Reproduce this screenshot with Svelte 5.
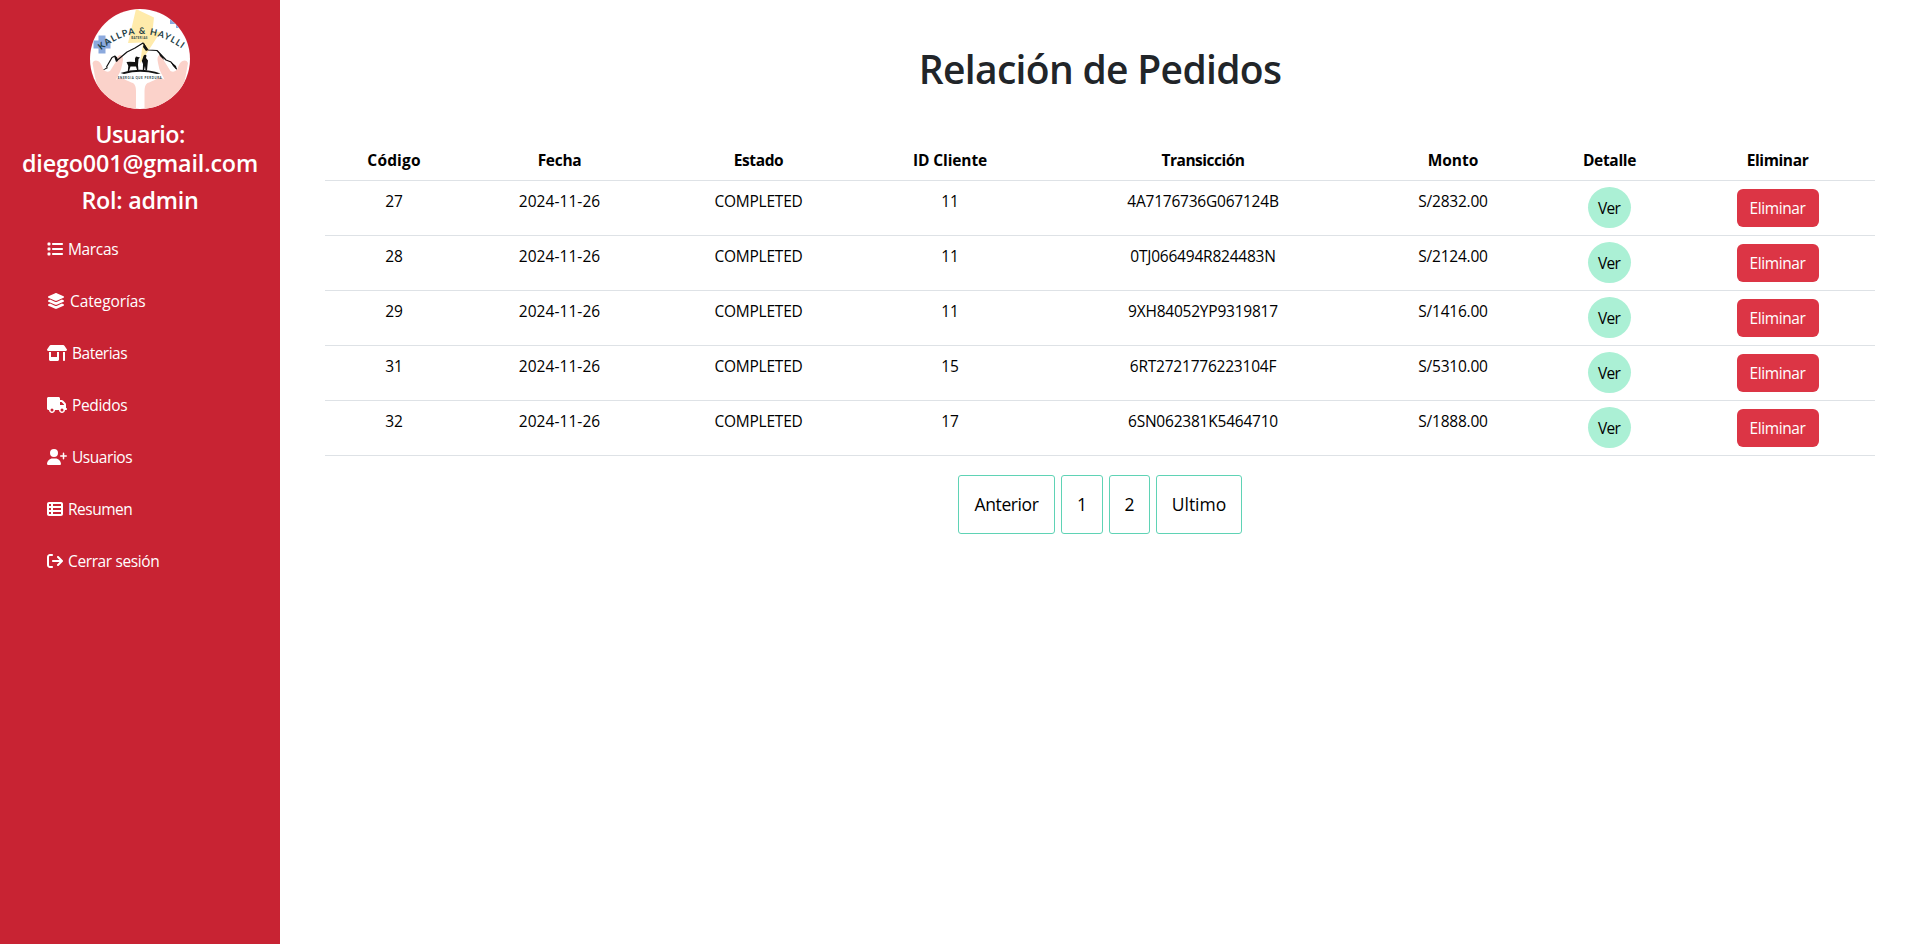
<script>
  const menu = [
    { label: 'Marcas', ls: -0.35, vw: 512, d: 'M40 48C26.7 48 16 58.7 16 72v48c0 13.3 10.7 24 24 24H88c13.3 0 24-10.7 24-24V72c0-13.3-10.7-24-24-24H40zM192 64c-17.7 0-32 14.3-32 32s14.3 32 32 32H480c17.7 0 32-14.3 32-32s-14.3-32-32-32H192zm0 160c-17.7 0-32 14.3-32 32s14.3 32 32 32H480c17.7 0 32-14.3 32-32s-14.3-32-32-32H192zm0 160c-17.7 0-32 14.3-32 32s14.3 32 32 32H480c17.7 0 32-14.3 32-32s-14.3-32-32-32H192zM16 232v48c0 13.3 10.7 24 24 24H88c13.3 0 24-10.7 24-24V232c0-13.3-10.7-24-24-24H40c-13.3 0-24 10.7-24 24zM40 368c-13.3 0-24 10.7-24 24v48c0 13.3 10.7 24 24 24H88c13.3 0 24-10.7 24-24V392c0-13.3-10.7-24-24-24H40z' },
    { label: 'Categorías', ls: -0.1, vw: 576, d: 'M264.5 5.2c14.9-6.9 32.1-6.9 47 0l218.6 101c8.5 3.9 13.9 12.4 13.9 21.8s-5.4 17.9-13.9 21.8l-218.6 101c-14.9 6.9-32.1 6.9-47 0L45.9 149.8C37.4 145.8 32 137.3 32 128s5.4-17.9 13.9-21.8L264.5 5.2zM476.9 209.6l53.2 24.6c8.5 3.9 13.9 12.4 13.9 21.8s-5.4 17.9-13.9 21.8l-218.6 101c-14.9 6.9-32.1 6.9-47 0L45.9 277.8C37.4 273.8 32 265.3 32 256s5.4-17.9 13.9-21.8l53.2-24.6 152 70.2c23.4 10.8 50.4 10.8 73.8 0l152-70.2zm-152 198.2l152-70.2 53.2 24.6c8.5 3.9 13.9 12.4 13.9 21.8s-5.4 17.9-13.9 21.8l-218.6 101c-14.9 6.9-32.1 6.9-47 0L45.9 405.8C37.4 401.8 32 393.3 32 384s5.4-17.9 13.9-21.8l53.2-24.6 152 70.2c23.4 10.8 50.4 10.8 73.8 0z' },
    { label: 'Baterias', ls: -0.5, vw: 640, d: 'M36.8 192H603.2c20.3 0 36.8-16.5 36.8-36.8c0-7.3-2.2-14.4-6.2-20.4L558.2 21.4C549.3 8 534.4 0 518.3 0H121.7c-16 0-31 8-39.9 21.4L6.2 134.7c-4 6.1-6.2 13.2-6.2 20.4C0 175.5 16.5 192 36.8 192zM64 224V384v80c0 26.5 21.5 48 48 48H336c26.5 0 48-21.5 48-48V384 224H320V384H128V224H64zm448 0V480c0 17.7 14.3 32 32 32s32-14.3 32-32V224H512z' },
    { label: 'Pedidos', ls: -0.35, vw: 640, d: 'M48 0C21.5 0 0 21.5 0 48V368c0 26.5 21.5 48 48 48H64c0 53 43 96 96 96s96-43 96-96H384c0 53 43 96 96 96s96-43 96-96h32c17.7 0 32-14.3 32-32s-14.3-32-32-32V288 256 237.3c0-17-6.7-33.3-18.7-45.3L512 114.7c-12-12-28.3-18.7-45.3-18.7H416V48c0-26.5-21.5-48-48-48H48zM416 160h50.7L544 237.3V256H416V160zM112 416a48 48 0 1 1 96 0 48 48 0 1 1 -96 0zm368-48a48 48 0 1 1 0 96 48 48 0 1 1 0-96z' },
    { label: 'Usuarios', ls: -0.45, vw: 640, d: 'M96 128a128 128 0 1 1 256 0A128 128 0 1 1 96 128zM0 482.3C0 383.8 79.8 304 178.3 304h91.4C368.2 304 448 383.8 448 482.3c0 16.4-13.3 29.7-29.7 29.7H29.7C13.3 512 0 498.7 0 482.3zM504 312V248H440c-13.3 0-24-10.7-24-24s10.7-24 24-24h64V136c0-13.3 10.7-24 24-24s24 10.7 24 24v64h64c13.3 0 24 10.7 24 24s-10.7 24-24 24H552v64c0 13.3-10.7 24-24 24s-24-10.7-24-24z' },
    { label: 'Resumen', ls: -0.5, vw: 512, d: 'M0 96C0 60.7 28.7 32 64 32H448c35.3 0 64 28.7 64 64V416c0 35.3-28.7 64-64 64H64c-35.3 0-64-28.7-64-64V96zm64 0v64h64V96H64zm384 0H192v64H448V96zM64 224v64h64V224H64zm384 0H192v64H448V224zM64 352v64h64V352H64zm384 0H192v64H448V352z' },
    { label: 'Cerrar sesión', ls: -0.38, vw: 512, d: 'M502.6 278.6c12.5-12.5 12.5-32.8 0-45.3l-128-128c-12.5-12.5-32.8-12.5-45.3 0s-12.5 32.8 0 45.3L402.7 224 192 224c-17.7 0-32 14.3-32 32s14.3 32 32 32l210.7 0-73.4 73.4c-12.5 12.5-12.5 32.8 0 45.3s32.8 12.5 45.3 0l128-128zM160 96c17.7 0 32-14.3 32-32s-14.3-32-32-32L96 32C43 32 0 75 0 128L0 384c0 53 43 96 96 96l64 0c17.7 0 32-14.3 32-32s-14.3-32-32-32l-64 0c-17.7 0-32-14.3-32-32l0-256c0-17.7 14.3-32 32-32l64 0z' }
  ];

  const columns = [
    { label: 'Código', width: 138, ls: 0.15 },
    { label: 'Fecha', width: 193, ls: -0.3 },
    { label: 'Estado', width: 205, ls: -0.4 },
    { label: 'ID Cliente', width: 178, ls: -0.1 },
    { label: 'Transicción', width: 328, ls: -0.5 },
    { label: 'Monto', width: 172, ls: 0 },
    { label: 'Detalle', width: 141, ls: -0.3 },
    { label: 'Eliminar', width: 195, ls: -0.38 }
  ];

  const orders = [
    { id: 27, date: '2024-11-26', status: 'COMPLETED', client: 11, tx: '4A7176736G067124B', amount: '2832.00' },
    { id: 28, date: '2024-11-26', status: 'COMPLETED', client: 11, tx: '0TJ066494R824483N', amount: '2124.00' },
    { id: 29, date: '2024-11-26', status: 'COMPLETED', client: 11, tx: '9XH84052YP9319817', amount: '1416.00' },
    { id: 31, date: '2024-11-26', status: 'COMPLETED', client: 15, tx: '6RT2721776223104F', amount: '5310.00' },
    { id: 32, date: '2024-11-26', status: 'COMPLETED', client: 17, tx: '6SN062381K5464710', amount: '1888.00' }
  ];

  const pages = [
    { label: 'Anterior', width: 97, ls: -0.42 },
    { label: '1', width: 42, ls: 0 },
    { label: '2', width: 41, ls: 0 },
    { label: 'Ultimo', width: 86, ls: -0.05 }
  ];
</script>

<div class="layout">
  <aside class="sidebar">
    <svg class="logo" viewBox="0 0 100 100" aria-label="Kallpa &amp; Haylli">
      <defs>
        <clipPath id="round"><circle cx="50" cy="50" r="50" /></clipPath>
        <path id="arc" d="M11 41.500Q50 8 95 42" />
        <path id="hand" d="M2.5 54Q4 50.5 8 52Q11 53 13 60Q16 64 20 62L27 51Q27 46 31 46Q34 47 32.500 54Q31.500 60 29.500 64Q27 68 26 71Q29 67 34 70Q40 73 43 74Q46 76 46 82V100H20V90Q7 82 5 68Z" />
      </defs>
      <g clip-path="url(#round)">
        <rect width="100" height="100" fill="#fff" />
        <path d="M46 0L64 8.500L62.500 22L70.500 23L50 54.500L53 33.500L38 34Z" fill="#ffebab" />
        <path d="M8.500 26.500h7v5h5v8h-5v5h-7v-5h-5v-8h5z" fill="#8ba9dd" />
        <path d="M84 3h10v16h-8v-4h-6v-7h4z" fill="#8ba9dd" />
        <use href="#hand" fill="#fbd2ca" />
        <use href="#hand" fill="#fbd2ca" transform="matrix(-1 0 0 1 100.500 0)" />
        <path d="M16.500 58L22 48.500L25 47L27.500 51L37 43L45 39L53 34L58 41L67 41.500L76 51L81 53L86.500 60" fill="none" stroke="#111" stroke-width="1.200" stroke-linejoin="round" />
        <path d="M13 61l4-3 1 1-4 2zM24 47l3 1 1 4-2 1zM54 34l4 7-2 1-3-4zM68 42l5 6 1 3-4-4zM80 52l6 5 1 4-4-4z" fill="#111" />
        <path d="M30.500 64Q50 57.500 70.500 64.500L67 65Q50 60.500 34 65Z" fill="#111" />
        <path d="M36.500 53Q39 52.500 45 53V49.500L46 47.500L50 48.500L48.500 50L48 56L48.500 62H47.300L46 57.500H40.500L39 62H37.800L38.300 57Z" fill="#111" />
        <path d="M53.500 47Q55 45 56.500 46.500L56 49L58 51.500L57.500 56L57 61.500H55.500L55 57L54 61.500H52.800L53 55L51.800 52Z" fill="#111" />
        <text class="name"><textPath href="#arc">KALLPA &amp; HAYLLI</textPath></text>
        <text class="tag" x="49.500" y="30">BATERIAS</text>
        <text class="tag slogan" x="50" y="69.700">ENERGIA QUE PERDURA</text>
      </g>
    </svg>
    <h4 class="user"><span class="user-label">Usuario:</span><span>diego001@gmail.com</span></h4>
    <h4 class="role">Rol: admin</h4>
    <nav class="menu">
      {#each menu as item}
        <a href="#top" class="menu-item">
          <svg class="icon" viewBox="0 0 {item.vw} 512" style="width: {item.vw / 32}px"><path d={item.d} /></svg>
          <span style="letter-spacing: {item.ls}px">{item.label}</span>
        </a>
      {/each}
    </nav>
  </aside>

  <main class="content">
    <h1>Relación de Pedidos</h1>
    <table>
      <colgroup>
        {#each columns as col}<col style="width: {col.width}px" />{/each}
      </colgroup>
      <thead>
        <tr>
          {#each columns as col}<th style="letter-spacing: {col.ls}px">{col.label}</th>{/each}
        </tr>
      </thead>
      <tbody>
        {#each orders as o}
          <tr>
            <td>{o.id}</td>
            <td class="date">{o.date}</td>
            <td>{o.status}</td>
            <td>{o.client}</td>
            <td>{o.tx}</td>
            <td>S/{o.amount}</td>
            <td><a href="#top" class="view">Ver</a></td>
            <td><button class="delete">Eliminar</button></td>
          </tr>
        {/each}
      </tbody>
    </table>
    <div class="pagination">
      {#each pages as p}
        <a href="#top" style="width: {p.width}px; letter-spacing: {p.ls}px">{p.label}</a>
      {/each}
    </div>
  </main>
</div>

<style>
  :global(body) {
    margin: 0;
    background: #fff;
  }
  .layout {
    display: flex;
    min-height: 100vh;
    font: 15.5px/24px 'Open Sans', 'Noto Sans', sans-serif;
    color: #000;
  }
  .layout * {
    box-sizing: border-box;
  }
  a {
    color: inherit;
    text-decoration: none;
  }
  .sidebar {
    width: 280px;
    flex: none;
    padding-top: 9px;
    background: #c82333;
    color: #fff;
    display: flex;
    flex-direction: column;
  }
  .logo {
    width: 100px;
    height: 100px;
    align-self: center;
  }
  .name {
    font: 700 9px 'Lato', sans-serif;
    letter-spacing: 1px;
    fill: #1c3d45;
  }
  .tag {
    font: 700 2.9px 'Lato', sans-serif;
    letter-spacing: 0.4px;
    text-anchor: middle;
    fill: #1c3d45;
  }
  .slogan {
    letter-spacing: 0.58px;
  }
  h4 {
    margin: 0;
    font-size: 23.3px;
    font-weight: 600;
    line-height: 29px;
    text-align: center;
  }
  .user {
    margin-top: 11px;
    display: flex;
    flex-direction: column;
    letter-spacing: -0.13px;
  }
  .user-label {
    letter-spacing: -0.58px;
  }
  .role {
    margin-top: 8px;
    letter-spacing: -0.25px;
  }
  .menu {
    margin-top: 8px;
  }
  .menu-item {
    display: flex;
    align-items: center;
    gap: 5px;
    height: 52px;
    padding-left: 47px;
  }
  .icon {
    height: 16px;
    flex: none;
    fill: #fff;
  }
  .content {
    flex: 1;
    padding: 45px 45px 0;
  }
  h1 {
    margin: 0 0 47px;
    font-size: 39px;
    font-weight: 600;
    line-height: 48px;
    letter-spacing: -0.68px;
    text-align: center;
    color: #212529;
  }
  table {
    width: 1550px;
    table-layout: fixed;
    border-collapse: separate;
    border-spacing: 0;
    text-align: center;
  }
  th,
  td {
    padding: 8px;
    vertical-align: top;
    border-bottom: 1px solid #dee2e6;
  }
  th {
    font-weight: 700;
  }
  td {
    letter-spacing: -0.22px;
  }
  .date {
    letter-spacing: 0.06px;
  }
  .view {
    display: block;
    width: 43px;
    height: 41px;
    margin: -2px auto -1px;
    padding: 9px 1px 0 0;
    border-radius: 50%;
    background: #abf0d5;
    letter-spacing: -0.7px;
  }
  .delete {
    display: block;
    width: 82px;
    height: 38px;
    margin: 0 auto;
    padding: 7px 0;
    border: 0;
    border-radius: 6px;
    background: #dc3545;
    color: #fff;
    font: inherit;
    letter-spacing: -0.4px;
  }
  .pagination {
    display: flex;
    justify-content: center;
    gap: 6px;
    margin-top: 19px;
  }
  .pagination a {
    padding: 15px 0;
    border: 1px solid #5fd3b5;
    border-radius: 3px;
    font-size: 17.5px;
    line-height: 27px;
    text-align: center;
  }
</style>
